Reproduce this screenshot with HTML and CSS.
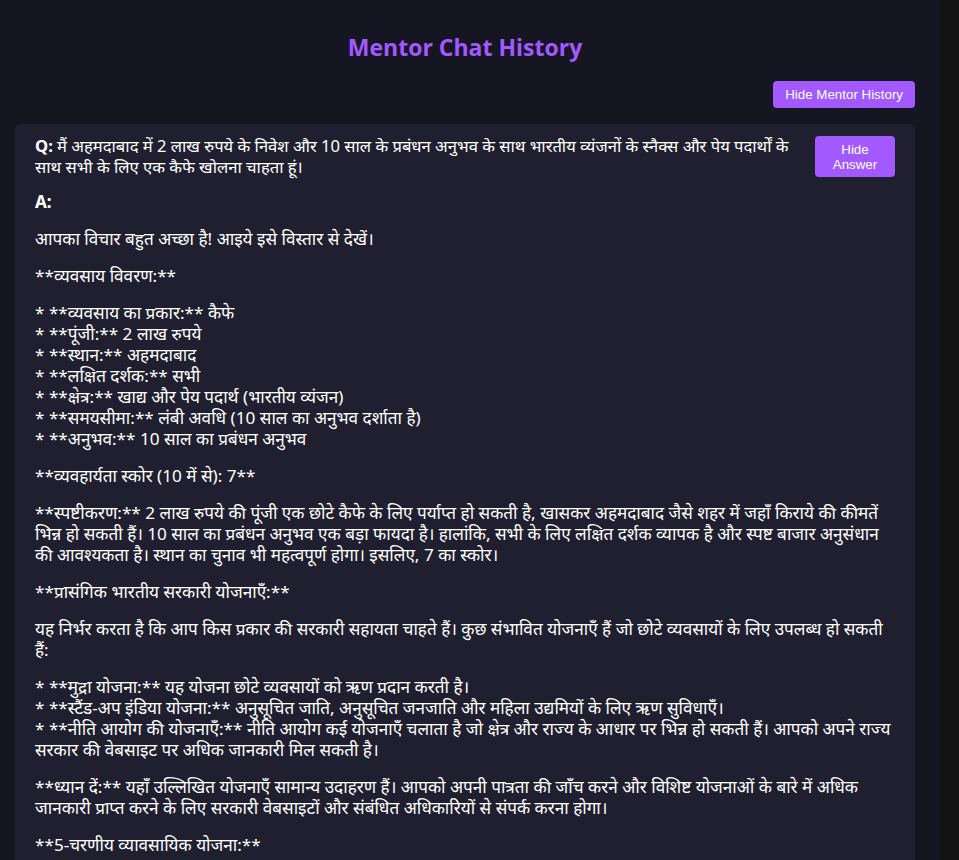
FILE: index.html
```html
<!DOCTYPE html>
<html lang="hi">
<head>
<meta charset="utf-8">
<title>Mentor Chat History</title>
<link rel="stylesheet" href="styles.css">
</head>
<body>
<div class="app">
  <main class="main">
    <h1 class="title">Mentor Chat History</h1>
    <div class="toolbar">
      <button class="btn btn-history">Hide Mentor History</button>
    </div>
    <section class="card">
      <div class="question-row">
        <p class="question"><b>Q:</b> मैं अहमदाबाद में 2 लाख रुपये के निवेश और 10 साल के प्रबंधन अनुभव के साथ भारतीय व्यंजनों के स्नैक्स और पेय पदार्थों के साथ सभी के लिए एक कैफे खोलना चाहता हूं।</p>
        <button class="btn btn-answer">Hide Answer</button>
      </div>
      <div class="answer">
        <p><b>A:</b></p>
        <p>आपका विचार बहुत अच्छा है! आइये इसे विस्तार से देखें।</p>
        <p>**व्यवसाय विवरण:**</p>
        <p>* **व्यवसाय का प्रकार:** कैफे<br>* **पूंजी:** 2 लाख रुपये<br>* **स्थान:** अहमदाबाद<br>* **लक्षित दर्शक:** सभी<br>* **क्षेत्र:** खाद्य और पेय पदार्थ (भारतीय व्यंजन)<br>* **समयसीमा:** लंबी अवधि (10 साल का अनुभव दर्शाता है)<br>* **अनुभव:** 10 साल का प्रबंधन अनुभव</p>
        <p>**व्यवहार्यता स्कोर (10 में से): 7**</p>
        <p>**स्पष्टीकरण:** 2 लाख रुपये की पूंजी एक छोटे कैफे के लिए पर्याप्त हो सकती है, खासकर अहमदाबाद जैसे शहर में जहाँ किराये की कीमतें भिन्न हो सकती हैं। 10 साल का प्रबंधन अनुभव एक बड़ा फायदा है। हालांकि, सभी के लिए लक्षित दर्शक व्यापक है और स्पष्ट बाजार अनुसंधान की आवश्यकता है। स्थान का चुनाव भी महत्वपूर्ण होगा। इसलिए, 7 का स्कोर।</p>
        <p>**प्रासंगिक भारतीय सरकारी योजनाएँ:**</p>
        <p>यह निर्भर करता है कि आप किस प्रकार की सरकारी सहायता चाहते हैं। कुछ संभावित योजनाएँ हैं जो छोटे व्यवसायों के लिए उपलब्ध हो सकती हैं:</p>
        <p>* **मुद्रा योजना:** यह योजना छोटे व्यवसायों को ऋण प्रदान करती है।<br>* **स्टैंड-अप इंडिया योजना:** अनुसूचित जाति, अनुसूचित जनजाति और महिला उद्यमियों के लिए ऋण सुविधाएँ।<br>* **नीति आयोग की योजनाएँ:** नीति आयोग कई योजनाएँ चलाता है जो क्षेत्र और राज्य के आधार पर भिन्न हो सकती हैं। आपको अपने राज्य सरकार की वेबसाइट पर अधिक जानकारी मिल सकती है।</p>
        <p>**ध्यान दें:** यहाँ उल्लिखित योजनाएँ सामान्य उदाहरण हैं। आपको अपनी पात्रता की जाँच करने और विशिष्ट योजनाओं के बारे में अधिक जानकारी प्राप्त करने के लिए सरकारी वेबसाइटों और संबंधित अधिकारियों से संपर्क करना होगा।</p>
        <p>**5-चरणीय व्यावसायिक योजना:**</p>
      </div>
    </section>
  </main>
  <aside class="gutter"></aside>
</div>
</body>
</html>
```

FILE: styles.css
```css
html, body {
  margin: 0;
  padding: 0;
  height: 100%;
  overflow: hidden;
}

body {
  background: #131313;
  font-family: "Noto Sans", sans-serif;
  color: #ffffff;
}

.app {
  display: flex;
  height: 100%;
}

.main {
  flex: 1;
  background: #161622;
  padding: 0 24px 0 15px;
  min-width: 0;
}

.gutter {
  width: 20px;
  flex: none;
  background: #131313;
}

.title {
  margin: 31px 0 0;
  text-align: center;
  color: #a259ff;
  font-family: "Open Sans", "Noto Sans", sans-serif;
  font-size: 23px;
  font-weight: 700;
  line-height: 32px;
}

.toolbar {
  display: flex;
  justify-content: flex-end;
  margin-top: 18px;
}

.btn {
  background: #a259ff;
  color: #ffffff;
  border: none;
  border-radius: 4px;
  font-family: "Liberation Sans", Arial, sans-serif;
  font-size: 13.33px;
  line-height: 15px;
  cursor: pointer;
}

.btn-history {
  height: 27px;
  padding: 0 12px;
}

.card {
  margin-top: 16px;
  background: #1f1f2f;
  border-radius: 6px;
  padding: 12px 20px 30px 20px;
}

.question-row {
  display: flex;
  align-items: flex-start;
  gap: 10px;
}

.card .question {
  flex: 1;
  margin: -1px 0 0;
  font-size: 16.6px;
}

.btn-answer {
  flex: none;
  width: 80px;
  height: 41px;
  padding: 0 10px;
}

.card p {
  font-size: 17.15px;
  line-height: 21px;
}

.answer p {
  margin: 16px 0 0;
}

.answer p:first-child {
  margin-top: 14px;
}
```
